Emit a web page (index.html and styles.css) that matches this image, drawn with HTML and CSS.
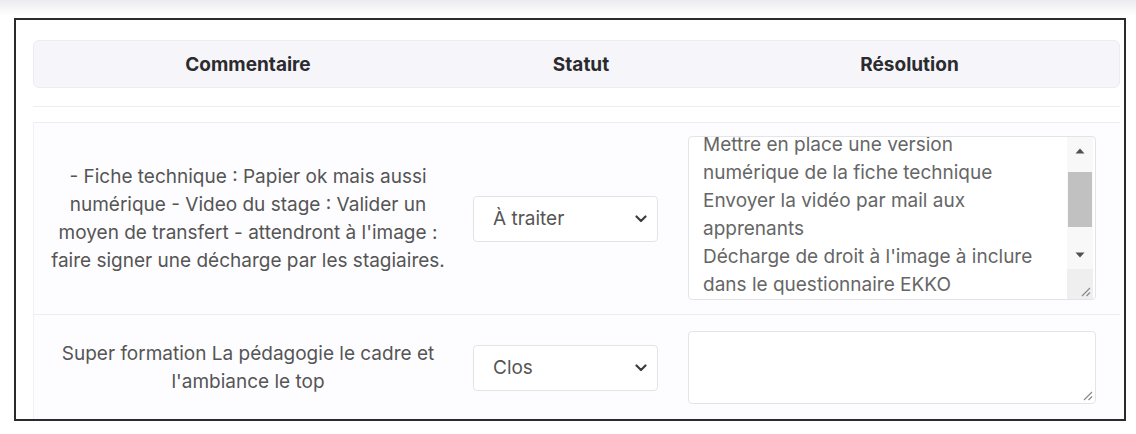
FILE: index.html
```html
<!DOCTYPE html>
<html lang="fr">
<head>
    <meta charset="UTF-8">
    <meta name="viewport" content="width=device-width, initial-scale=1.0">
    <title>Commentaires</title>
    <link rel="stylesheet" href="styles.css">
</head>
<body>
    <div class="frame">
        <div class="comments-table">
            <!-- column titles -->
            <div class="table-head">
                <div class="head-cell">Commentaire</div>
                <div class="head-cell">Statut</div>
                <div class="head-cell">Résolution</div>
            </div>

            <div class="spacer-row"></div>

            <!-- comment 1 -->
            <div class="table-row">
                <div class="comment-cell">- Fiche technique : Papier ok mais aussi numérique - Video du stage : Valider un moyen de transfert - attendront à l'image : faire signer une décharge par les stagiaires.</div>
                <div class="status-cell">
                    <div class="select-wrap">
                        <select class="status-select">
                            <option selected>À traiter</option>
                            <option>En cours</option>
                            <option>Clos</option>
                        </select>
                        <svg class="chevron" width="12" height="8" viewBox="0 0 12 8"><path d="M1.5 1.5 L6 6 L10.5 1.5" fill="none" stroke="#3d3d3d" stroke-width="2.2" stroke-linecap="round" stroke-linejoin="round"/></svg>
                    </div>
                </div>
                <div class="resolution-cell">
                    <div class="textarea-wrap tall-wrap">
                        <textarea id="resolution1" class="resolution tall">Mettre en place une version
numérique de la fiche technique
Envoyer la vidéo par mail aux
apprenants
Décharge de droit à l'image à inclure
dans le questionnaire EKKO

</textarea>
                        <!-- scrollbar drawn over the field -->
                        <div class="scrollbar">
                            <div class="scroll-btn">
                                <svg width="10" height="6" viewBox="0 0 10 6"><path d="M0.5 5.5 L5 0.5 L9.5 5.5 Z" fill="#505050"/></svg>
                            </div>
                            <div class="scroll-track">
                                <div class="scroll-thumb"></div>
                            </div>
                            <div class="scroll-btn">
                                <svg width="10" height="6" viewBox="0 0 10 6"><path d="M0.5 0.5 L5 5.5 L9.5 0.5 Z" fill="#505050"/></svg>
                            </div>
                        </div>
                        <div class="scroll-corner">
                            <svg class="grip" width="12" height="12" viewBox="0 0 12 12"><path d="M11 3 L3 11 M11 7.5 L7.5 11" stroke="#8a8a8a" stroke-width="1.2"/></svg>
                        </div>
                    </div>
                </div>
            </div>

            <!-- comment 2 -->
            <div class="table-row">
                <div class="comment-cell">Super formation La pédagogie le cadre et l'ambiance le top</div>
                <div class="status-cell">
                    <div class="select-wrap">
                        <select class="status-select">
                            <option>À traiter</option>
                            <option>En cours</option>
                            <option selected>Clos</option>
                        </select>
                        <svg class="chevron" width="12" height="8" viewBox="0 0 12 8"><path d="M1.5 1.5 L6 6 L10.5 1.5" fill="none" stroke="#3d3d3d" stroke-width="2.2" stroke-linecap="round" stroke-linejoin="round"/></svg>
                    </div>
                </div>
                <div class="resolution-cell">
                    <div class="textarea-wrap short-wrap">
                        <textarea class="resolution short"></textarea>
                        <svg class="grip grip-alone" width="12" height="12" viewBox="0 0 12 12"><path d="M11 3 L3 11 M11 7.5 L7.5 11" stroke="#8a8a8a" stroke-width="1.2"/></svg>
                    </div>
                </div>
            </div>
        </div>
    </div>

    <script>
        document.getElementById('resolution1').scrollTop = 6;
    </script>
</body>
</html>
```

FILE: styles.css
```css
body {
    margin: 0;
    padding: 18px 0 0 14px;
    font-family: Inter, "Liberation Sans", Arial, sans-serif;
    background: #ffffff linear-gradient(to bottom, #ececef, #ffffff 16px) no-repeat;
    color: #555;
}
.frame {
    box-sizing: border-box;
    width: 1112px;
    height: 403px;
    padding: 20px 0 0 17px;
    border: 2px solid #2b2b2d;
    background-color: #ffffff;
    overflow: hidden;
}
.comments-table {
    width: 1087px;
}
.table-head {
    display: grid;
    grid-template-columns: 428px 238px 1fr;
    height: 48px;
    box-sizing: border-box;
    background-color: #f6f6fa;
    border: 1px solid #ebebf1;
    border-radius: 6px;
}
.head-cell {
    display: flex;
    align-items: center;
    justify-content: center;
    font-size: 19px;
    font-weight: 700;
    color: #2b2b2f;
}
.spacer-row {
    box-sizing: border-box;
    height: 17px;
    margin-top: 18px;
    border-top: 1px solid #ececf2;
    border-bottom: 1px solid #ececf2;
}
.table-row {
    display: grid;
    grid-template-columns: 428px 211px 1fr;
    align-items: center;
    border-left: 1px solid #f1f1f5;
    border-bottom: 1px solid #ececf2;
    background-color: #fdfdff;
}
.comment-cell {
    padding: 0 14px;
    text-align: center;
    font-size: 19px;
    line-height: 28px;
    color: #555;
}
.status-cell {
    padding-left: 11px;
}
.select-wrap {
    position: relative;
    width: 185px;
}
.status-select {
    appearance: none;
    -webkit-appearance: none;
    box-sizing: border-box;
    width: 185px;
    height: 46px;
    padding: 0 36px 0 19px;
    border: 1px solid #e3e4ea;
    border-radius: 4px;
    background-color: #ffffff;
    font-family: inherit;
    font-size: 19px;
    color: #555;
}
.chevron {
    position: absolute;
    top: 19px;
    right: 11px;
    pointer-events: none;
}
.resolution-cell {
    padding-left: 15px;
}
.textarea-wrap {
    position: relative;
    width: 408px;
}
.tall-wrap {
    margin: 13px 0 14px;
}
.short-wrap {
    margin: 16px 0;
}
.resolution {
    display: block;
    box-sizing: border-box;
    width: 408px;
    margin: 0;
    padding: 0 14px;
    border: 1px solid #e3e4ea;
    border-radius: 4px;
    background-color: #ffffff;
    font-family: inherit;
    font-size: 19px;
    line-height: 28px;
    color: #666;
    white-space: pre;
    overflow: hidden;
    resize: none;
}
.resolution.tall {
    height: 164px;
    padding-right: 44px;
}
.resolution.short {
    height: 73px;
}
.scrollbar {
    position: absolute;
    top: 1px;
    right: 3px;
    width: 26px;
    height: 132px;
    display: flex;
    flex-direction: column;
    background-color: #f8f8f8;
}
.scroll-btn {
    height: 28px;
    display: flex;
    align-items: center;
    justify-content: center;
}
.scroll-track {
    flex: 1;
    padding-top: 7px;
}
.scroll-thumb {
    height: 55px;
    margin: 0 1px;
    background-color: #c1c1c1;
}
.scroll-corner {
    position: absolute;
    right: 3px;
    bottom: 1px;
    width: 26px;
    height: 30px;
    background-color: #efefef;
}
.grip {
    position: absolute;
    right: 2px;
    bottom: 2px;
    pointer-events: none;
}
.grip-alone {
    right: 3px;
    bottom: 3px;
}
```
